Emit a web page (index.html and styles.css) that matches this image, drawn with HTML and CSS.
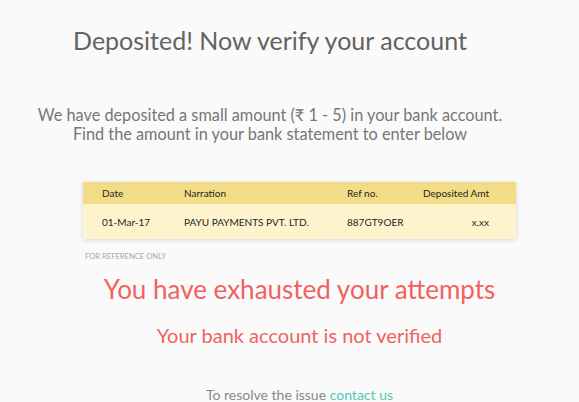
FILE: index.html
```html
<!DOCTYPE html>
<html>
<head>
<meta charset="utf-8">
<link rel="stylesheet" href="styles.css">
</head>
<body>
<main class="page">
  <header class="top">
    <h1 class="title">Deposited! Now verify your account</h1>
    <p class="intro">We have deposited a small amount (₹ 1 - 5) in your bank account.<br>Find the amount in your bank statement to enter below</p>
  </header>
  <div class="bottom">
    <section class="statement">
      <div class="card">
        <div class="row head">
          <span class="c-date">Date</span>
          <span class="c-narr">Narration</span>
          <span class="c-ref">Ref no.</span>
          <span class="c-amt">Deposited Amt</span>
        </div>
        <div class="row body">
          <span class="c-date">01-Mar-17</span>
          <span class="c-narr">PAYU PAYMENTS PVT. LTD.</span>
          <span class="c-ref">887GT9OER</span>
          <span class="c-amt">x.xx</span>
        </div>
      </div>
      <div class="note">FOR REFERENCE ONLY</div>
    </section>
    <h2 class="error">You have exhausted your attempts</h2>
    <p class="sub-error">Your bank account is not verified</p>
    <p class="resolve">To resolve the issue <a class="link" href="#">contact us</a></p>
  </div>
</main>
</body>
</html>
```
FILE: styles.css
```css
html, body {
  margin: 0;
  padding: 0;
  background: #fafafa;
}
body {
  font-family: Lato, "Open Sans", sans-serif;
  color: #666;
}
.page {
  display: flex;
  flex-direction: column;
  text-align: center;
}
.top {
  display: flex;
  flex-direction: column;
  align-items: center;
  padding-right: 39px;
}
.bottom {
  display: flex;
  flex-direction: column;
  align-items: center;
  padding-left: 20px;
}
.title {
  margin: 25px 0 0;
  font-size: 25px;
  font-weight: 400;
  line-height: 30px;
  color: #636363;
}
.intro {
  margin: 50px 0 0;
  font-size: 16.3px;
  line-height: 19px;
  color: #767676;
}
.statement {
  margin-top: 39px;
  width: 433px;
  text-align: left;
}
.card {
  box-shadow: 0 1px 5px rgba(0,0,0,0.15);
}
.row {
  display: grid;
  grid-template-columns: 82px 163px 70px 72px;
  padding: 0 27px 0 19px;
  font-size: 10px;
  color: #1f1f1f;
  align-items: center;
}
.row.head {
  height: 22px;
  background: #f3dc88;
}
.row.body {
  height: 35px;
  background: #fdf3cd;
}
.c-amt {
  text-align: right;
}
.note {
  margin: 12px 0 0 2px;
  font-size: 7.6px;
  line-height: 10px;
  color: #a8a8a8;
}
.error {
  margin: 12px 0 0;
  font-size: 26px;
  font-weight: 400;
  line-height: 32px;
  color: #f06262;
}
.sub-error {
  margin: 18px 0 0;
  font-size: 20px;
  line-height: 24px;
  color: #f06262;
}
.resolve {
  margin: 39px 0 0;
  font-size: 14px;
  line-height: 17px;
  color: #888;
}
.link {
  color: #4fcab1;
  text-decoration: none;
}
```
